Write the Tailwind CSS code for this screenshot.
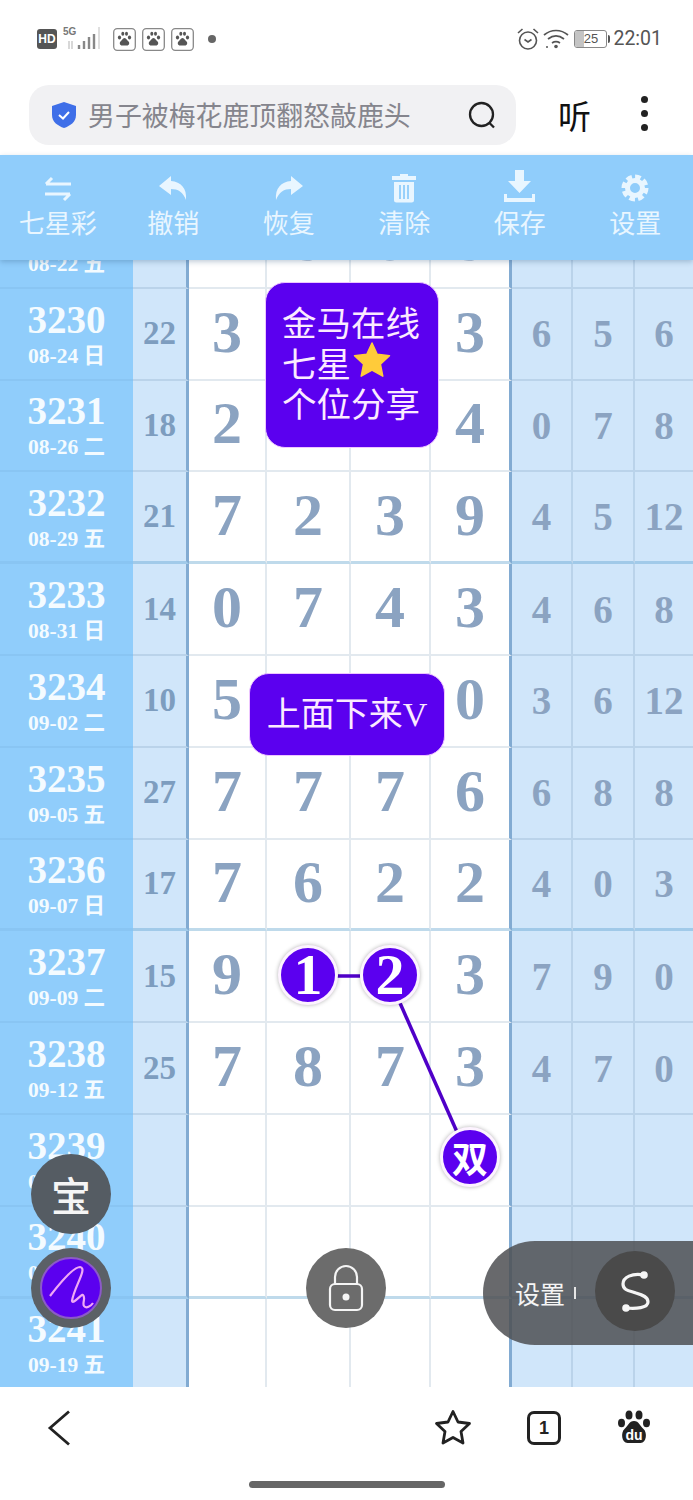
<!DOCTYPE html>
<html><head><meta charset="utf-8"><script src="https://cdn.jsdelivr.net/npm/@tailwindcss/browser@4"></script></head>
<body class="bg-white">
<div class="relative w-[693px] h-[1500px] overflow-hidden bg-white flex flex-col font-['Noto_Sans_CJK_SC','Noto_Sans',sans-serif]">

<!-- status bar -->
<div class="h-[75px] flex-none flex items-start justify-between pl-[37px] pr-[31px] pt-[27px] text-[#555]">
  <div class="flex items-center h-[24px]">
    <span class="w-[20px] h-[20px] rounded-[3px] bg-[#555] text-white text-[12px] font-bold leading-[20px] text-center font-['Liberation_Sans']">HD</span>
    <svg width="44" height="24" viewBox="0 0 44 24" class="ml-[5px] flex-none"><text x="1" y="8" font-size="10" font-family="Liberation Sans" fill="#777" font-weight="700">5G</text><path d="M7 14v8M10 14v8" stroke="#ccc" stroke-width="1.500"/><path d="M17 18v4M22 14v8M27 10v12M32 7v15" stroke="#888" stroke-width="2.400"/><path d="M37 0v22" stroke="#d5d5d5" stroke-width="1.500"/></svg>
    <div class="flex gap-[6px] ml-[7px]">
      <svg width="23" height="23" viewBox="0 0 23 23"><rect x=".7" y=".7" width="21.600" height="21.600" rx="3.500" fill="none" stroke="#888" stroke-width="1.300"/><g fill="#555"><ellipse cx="6.500" cy="9.500" rx="1.600" ry="2"/><ellipse cx="9.800" cy="5.800" rx="1.500" ry="2"/><ellipse cx="13.500" cy="5.800" rx="1.500" ry="2"/><ellipse cx="16.500" cy="9.500" rx="1.600" ry="2"/><path d="M11.500 10c-2 0-2.500 2.500-4 3.500-1.500 1.500-.5 4 1.500 4h5c2 0 3-2.500 1.500-4-1.500-1-2-3.500-4-3.500z"/></g></svg>
      <svg width="23" height="23" viewBox="0 0 23 23"><rect x=".7" y=".7" width="21.600" height="21.600" rx="3.500" fill="none" stroke="#888" stroke-width="1.300"/><g fill="#555"><ellipse cx="6.500" cy="9.500" rx="1.600" ry="2"/><ellipse cx="9.800" cy="5.800" rx="1.500" ry="2"/><ellipse cx="13.500" cy="5.800" rx="1.500" ry="2"/><ellipse cx="16.500" cy="9.500" rx="1.600" ry="2"/><path d="M11.500 10c-2 0-2.500 2.500-4 3.500-1.500 1.500-.5 4 1.500 4h5c2 0 3-2.500 1.500-4-1.500-1-2-3.500-4-3.500z"/></g></svg>
      <svg width="23" height="23" viewBox="0 0 23 23"><rect x=".7" y=".7" width="21.600" height="21.600" rx="3.500" fill="none" stroke="#888" stroke-width="1.300"/><g fill="#555"><ellipse cx="6.500" cy="9.500" rx="1.600" ry="2"/><ellipse cx="9.800" cy="5.800" rx="1.500" ry="2"/><ellipse cx="13.500" cy="5.800" rx="1.500" ry="2"/><ellipse cx="16.500" cy="9.500" rx="1.600" ry="2"/><path d="M11.500 10c-2 0-2.500 2.500-4 3.500-1.500 1.500-.5 4 1.500 4h5c2 0 3-2.500 1.500-4-1.500-1-2-3.500-4-3.500z"/></g></svg>
    </div>
    <span class="ml-[14px] w-[8px] h-[8px] rounded-full bg-[#666]"></span>
  </div>
  <div class="flex items-center h-[24px]">
    <svg width="24" height="24" viewBox="0 0 24 24" fill="none" stroke="#555" stroke-width="1.600"><circle cx="12" cy="13.500" r="8.500"/><path d="M8.500 12.500l3.500 2.500 3.500-2.500M2 6l4.500-4M22 6l-4.500-4"/></svg>
    <svg width="26" height="22" viewBox="0 0 26 22" fill="none" stroke="#555" stroke-width="1.700" class="ml-[3px]"><path d="M1 7c7-6 17-6 24 0M5 11c5-4 11-4 16 0M9 15c3-2 5-2 8 0"/><circle cx="13" cy="18.500" r="1.800" fill="#555" stroke="none"/><circle cx="4" cy="19" r="1" fill="#555" stroke="none"/></svg>
    <div class="ml-[5px] w-[33px] h-[18px] rounded-[3px] border border-[#888] relative overflow-hidden text-[13px] leading-[16px] text-center text-[#555] font-['Liberation_Sans'] flex-none"><span class="absolute left-0 top-0 h-full w-[9px] bg-[#c4c4c4]"></span><span class="relative">25</span></div>
    <span class="ml-[1px] w-[2px] h-[8px] bg-[#555] rounded-r"></span>
    <span class="ml-[3px] text-[19.500px] leading-[24px] font-['Roboto'] text-[#555]">22:01</span>
  </div>
</div>

<!-- search row -->
<div class="h-[80px] flex-none pl-[29px] flex items-start pt-[10px]">
  <div class="w-[487px] h-[60px] flex-none rounded-[20px] bg-[#f1f1f3] flex items-center pl-[22px] pr-[19px]">
    <svg width="26" height="28" viewBox="0 0 26 28" class="flex-none"><path d="M13 1l12 4v9c0 7-6 11-12 13C7 25 1 21 1 14V5z" fill="#3f6fe8"/><path d="M8 14l4 3.500 6-6.500" fill="none" stroke="#fff" stroke-width="2"/></svg>
    <span class="ml-[11px] flex-1 text-[26.900px] leading-[34px] text-[#85858d] whitespace-nowrap">男子被梅花鹿顶翻怒敲鹿头</span>
    <svg width="30" height="30" viewBox="0 0 30 30" fill="none" stroke="#222" stroke-width="2.300" class="flex-none"><circle cx="14.500" cy="14.500" r="11.500"/><path d="M22 22.500l5 5"/></svg>
  </div>
  <span class="ml-[42px] text-[33px] leading-[60px] text-[#111] w-[33px] flex-none">听</span>
  <div class="flex flex-col gap-[7px] ml-[50px] pt-[11px]"><span class="w-[7px] h-[7px] rounded-full bg-[#222]"></span><span class="w-[7px] h-[7px] rounded-full bg-[#222]"></span><span class="w-[7px] h-[7px] rounded-full bg-[#222]"></span></div>
</div>

<!-- toolbar -->
<div class="relative z-10 h-[105px] flex-none bg-[#90cdfb] grid grid-cols-6 shadow-[0_2px_5px_rgba(40,80,120,0.28)] text-[#e9f6ff] text-[26px] leading-[30px] text-center">
  <div class="flex flex-col items-center pt-[18px]"><svg width="30" height="30" viewBox="0 0 30 30" fill="none" stroke="#e9f6ff" stroke-width="3"><path d="M3 11h25M3 11l6-6M27 21H2M27 21l-6 6"/></svg><span class="mt-[4px]">七星彩</span></div>
  <div class="flex flex-col items-center pt-[18px]"><svg width="30" height="30" viewBox="0 0 30 30" fill="#e9f6ff"><path d="M13 3L1 13l12 9v-6c7 0 12 3 15 11 1-12-5-18-15-19z"/></svg><span class="mt-[4px]">撤销</span></div>
  <div class="flex flex-col items-center pt-[18px]"><svg width="30" height="30" viewBox="0 0 30 30" fill="#e9f6ff"><path d="M17 3l12 10-12 9v-6C10 16 5 19 2 27 1 15 7 9 17 8z"/></svg><span class="mt-[4px]">恢复</span></div>
  <div class="flex flex-col items-center pt-[18px]"><svg width="30" height="30" viewBox="0 0 30 30"><path d="M3 3h8V1h8v2h8v4H3zM5 9h20v18a2.500 2.500 0 0 1-2.500 2.500h-15A2.500 2.500 0 0 1 5 27z" fill="#e9f6ff"/><path d="M11 12v14M15 12v14M19 12v14" stroke="#90cdfb" stroke-width="1.800"/></svg><span class="mt-[4px]">清除</span></div>
  <div class="flex flex-col items-center pt-[15px]"><svg width="33" height="33" viewBox="0 0 33 33" fill="#e9f6ff"><path d="M12 0h9v11h7L16.500 23 5 11h7z"/><path d="M1 24h3v4h25v-4h3v8H1z"/></svg><span class="mt-[4px]">保存</span></div>
  <div class="flex flex-col items-center pt-[18px]"><svg width="30" height="30" viewBox="0 0 30 30" fill="none" stroke="#e9f6ff"><circle cx="15" cy="15" r="11" stroke-width="5" stroke-dasharray="5.500 3.100"/><circle cx="15" cy="15" r="7.500" stroke-width="5"/></svg><span class="mt-[4px]">设置</span></div>
</div>

<!-- table -->
<div class="h-[1127px] flex-none overflow-hidden">
  <div class="mt-[-63px] leading-none font-['Liberation_Serif','Noto_Sans_CJK_SC',serif] font-bold
    [&>div]:grid [&>div]:grid-cols-[133px_56px_78px_84px_80px_81px_61px_62px_58px] [&>div]:h-[91.8px]
    [&>div>div]:flex [&>div>div]:items-center [&>div>div]:justify-center [&>div>div]:border-b-2 [&>div>div]:border-b-[#3c6e96]/15
    [&>div:nth-child(4n)>div]:border-b-[3px] [&>div:nth-child(4n)>div]:border-b-[#4a96c8]/35
    [&>div>div:nth-child(1)]:flex-col [&>div>div:nth-child(1)]:bg-[#90cdfb] [&>div>div:nth-child(1)]:text-[#f4fbff] [&>div>div:nth-child(1)]:border-b-[#3c6e96]/8
    [&>div>div:nth-child(2)]:bg-[#d0e6fa] [&>div>div:nth-child(2)]:text-[33px] [&>div>div:nth-child(2)]:text-[#7d9dbf] [&>div>div:nth-child(2)]:border-r-[3px] [&>div>div:nth-child(2)]:border-r-[#82abd2]
    [&>div>div:nth-child(3)]:text-[60px] [&>div>div:nth-child(4)]:text-[60px] [&>div>div:nth-child(5)]:text-[60px] [&>div>div:nth-child(6)]:text-[60px]
    [&>div>div:nth-child(3)]:pb-[4px] [&>div>div:nth-child(4)]:pb-[4px] [&>div>div:nth-child(5)]:pb-[4px] [&>div>div:nth-child(6)]:pb-[4px]
    [&>div>div:nth-child(3)]:border-r-2 [&>div>div:nth-child(4)]:border-r-2 [&>div>div:nth-child(5)]:border-r-2 [&>div>div:nth-child(7)]:border-r-2 [&>div>div:nth-child(8)]:border-r-2
    [&>div>div:nth-child(3)]:border-r-[#3c6e96]/15 [&>div>div:nth-child(4)]:border-r-[#3c6e96]/15 [&>div>div:nth-child(5)]:border-r-[#3c6e96]/15 [&>div>div:nth-child(7)]:border-r-[#3c6e96]/15 [&>div>div:nth-child(8)]:border-r-[#3c6e96]/15
    [&>div>div:nth-child(6)]:border-r-[3px] [&>div>div:nth-child(6)]:border-r-[#82abd2]
    [&>div>div:nth-child(n+3)]:text-[#8ba3c1]
    [&>div>div:nth-child(7)]:bg-[#d0e6fa] [&>div>div:nth-child(8)]:bg-[#d0e6fa] [&>div>div:nth-child(9)]:bg-[#d0e6fa]
    [&>div>div:nth-child(7)]:text-[39px] [&>div>div:nth-child(8)]:text-[39px] [&>div>div:nth-child(9)]:text-[39px]
    [&_b]:text-[39px] [&_b]:leading-[36px] [&_b]:mt-[2px] [&_i]:not-italic [&_i]:text-[21.500px] [&_i]:leading-[24px] [&_i]:mt-[6px]">
    <div><div><b>3229</b><i>08-22 五</i></div><div></div><div>2</div><div>3</div><div>8</div><div>3</div><div></div><div></div><div></div></div>
    <div><div><b>3230</b><i>08-24 日</i></div><div>22</div><div>3</div><div>7</div><div>9</div><div>3</div><div>6</div><div>5</div><div>6</div></div>
    <div><div><b>3231</b><i>08-26 二</i></div><div>18</div><div>2</div><div>5</div><div>7</div><div>4</div><div>0</div><div>7</div><div>8</div></div>
    <div><div><b>3232</b><i>08-29 五</i></div><div>21</div><div>7</div><div>2</div><div>3</div><div>9</div><div>4</div><div>5</div><div>12</div></div>
    <div><div><b>3233</b><i>08-31 日</i></div><div>14</div><div>0</div><div>7</div><div>4</div><div>3</div><div>4</div><div>6</div><div>8</div></div>
    <div><div><b>3234</b><i>09-02 二</i></div><div>10</div><div>5</div><div>2</div><div>3</div><div>0</div><div>3</div><div>6</div><div>12</div></div>
    <div><div><b>3235</b><i>09-05 五</i></div><div>27</div><div>7</div><div>7</div><div>7</div><div>6</div><div>6</div><div>8</div><div>8</div></div>
    <div><div><b>3236</b><i>09-07 日</i></div><div>17</div><div>7</div><div>6</div><div>2</div><div>2</div><div>4</div><div>0</div><div>3</div></div>
    <div><div><b>3237</b><i>09-09 二</i></div><div>15</div><div>9</div><div></div><div></div><div>3</div><div>7</div><div>9</div><div>0</div></div>
    <div><div><b>3238</b><i>09-12 五</i></div><div>25</div><div>7</div><div>8</div><div>7</div><div>3</div><div>4</div><div>7</div><div>0</div></div>
    <div><div><b>3239</b><i>09-14 日</i></div><div></div><div></div><div></div><div></div><div></div><div></div><div></div><div></div></div>
    <div><div><b>3240</b><i>09-16 二</i></div><div></div><div></div><div></div><div></div><div></div><div></div><div></div><div></div></div>
    <div><div><b>3241</b><i>09-19 五</i></div><div></div><div></div><div></div><div></div><div></div><div></div><div></div><div></div></div>
  </div>
</div>

<!-- bottom nav -->
<div class="relative flex-1 bg-white">
  <svg width="24" height="36" viewBox="0 0 24 36" fill="none" stroke="#222" stroke-width="2.800" class="absolute left-[47px] top-[23px]"><path d="M22 1.500L3 18l19 16.500"/></svg>
  <svg width="38" height="36" viewBox="0 0 38 36" fill="none" stroke="#222" stroke-width="2.800" stroke-linejoin="round" class="absolute left-[434px] top-[22px]"><path d="M19 2.500l5 10.500 11.500 1.500-8.500 8 2 11.500-10-5.500-10 5.500 2-11.500-8.500-8L14 13z"/></svg>
  <div class="absolute left-[527px] top-[24px] w-[34px] h-[34px] rounded-[7px] border-[3px] border-[#222] text-[#222] text-[18px] font-bold leading-[28px] text-center font-['Liberation_Sans']">1</div>
  <svg width="34" height="36" viewBox="0 0 34 36" class="absolute left-[617px] top-[23px]"><g fill="#222"><ellipse cx="4.500" cy="13" rx="3.500" ry="4.200"/><ellipse cx="12" cy="5" rx="3.500" ry="4.500"/><ellipse cx="22" cy="5" rx="3.500" ry="4.500"/><ellipse cx="29.500" cy="13" rx="3.500" ry="4.200"/><path d="M17 11c-5 0-6 5-9.500 8-4 3.500-3 14 3 14h13c6 0 7-10.500 3-14-3.500-3-4.500-8-9.500-8z"/></g><text x="17" y="30" text-anchor="middle" font-size="14" font-family="Liberation Sans" font-weight="700" fill="#fff">du</text></svg>
  <div class="absolute left-[249px] top-[94px] w-[196px] h-[7px] rounded-full bg-[#666]"></div>
</div>

<!-- overlays -->
<div class="absolute left-[265px] top-[282px] w-[174px] h-[166px] rounded-[20px] bg-[#5b00ef] border border-[#eec6ff] pl-[16px] pt-[18px] text-[34.500px] leading-[40.500px] text-[#fbeaff] whitespace-nowrap">
  <div>金马在线</div>
  <div class="flex items-center">七星<svg width="38" height="38" viewBox="0 0 38 38" class="ml-[2px] mt-[-4px]"><path d="M19 2l5.200 11.200 12.300 1.500-9.100 8.400 2.400 12.100L19 29.200 8.200 35.200l2.400-12.100L1.500 14.700l12.300-1.500z" fill="#ffcb3a" stroke="#ffcb3a" stroke-width="1.500" stroke-linejoin="round"/></svg></div>
  <div>个位分享</div>
</div>
<div class="absolute left-[249px] top-[673px] w-[196px] h-[83px] rounded-[20px] bg-[#5b00ef] border border-[#eec6ff] flex items-center justify-center text-[34px] text-[#fbeaff] font-['Liberation_Serif','Noto_Sans_CJK_SC',serif] whitespace-nowrap">上面下来V</div>

<svg width="693" height="1500" viewBox="0 0 693 1500" class="absolute left-0 top-0 pointer-events-none"><path d="M336 976h24" stroke="#4f00c8" stroke-width="3.500"/><path d="M400 1003l57 129" stroke="#4f00c8" stroke-width="3.500"/></svg>
<div class="absolute left-[278px] top-[945px] w-[60px] h-[60px] rounded-full bg-[#5b00ef] border-[3px] border-[#fdf3ff] shadow-[0_0_4px_rgba(0,0,0,0.3)] flex items-center justify-center text-white font-bold text-[58px] leading-none font-['Liberation_Serif']">1</div>
<div class="absolute left-[360px] top-[945px] w-[60px] h-[60px] rounded-full bg-[#5b00ef] border-[3px] border-[#fdf3ff] shadow-[0_0_4px_rgba(0,0,0,0.3)] flex items-center justify-center text-white font-bold text-[58px] leading-none font-['Liberation_Serif']">2</div>
<div class="absolute left-[440px] top-[1127px] w-[60px] h-[60px] rounded-full bg-[#5b00ef] border-[3px] border-[#fdf3ff] shadow-[0_0_4px_rgba(0,0,0,0.3)] flex items-center justify-center text-white font-bold text-[36px] leading-none">双</div>

<div class="absolute left-[31px] top-[1154px] w-[80px] h-[80px] rounded-full bg-[#555c63] flex items-center justify-center text-[#f5f5f5] font-medium text-[40px] leading-none">宝</div>
<div class="absolute left-[31px] top-[1248px] w-[80px] h-[80px] rounded-full bg-[#5b6066] flex items-center justify-center">
  <div class="w-[62px] h-[62px] rounded-full bg-[#5b00ef] border-2 border-[#8c5ac8] flex items-center justify-center">
    <svg width="50" height="50" viewBox="0 0 50 50" fill="none" stroke="#f0a8f5" stroke-width="2.200"><path d="M4 33C14 20 28 4 34 4 42 5 28 24 26 38 27 42 36 30 37 32 40 35 36 40 38 43 40 46 45 43 47 40"/></svg>
  </div>
</div>
<div class="absolute left-[306px] top-[1248px] w-[80px] h-[80px] rounded-full bg-[#6c6c6c] flex items-center justify-center">
  <svg width="38" height="48" viewBox="0 0 38 48" fill="none" stroke="#f5f5f5" stroke-width="2.200"><path d="M8 20v-7a11 11 0 0 1 22 0v7"/><rect x="3" y="20" width="32" height="26" rx="5"/><circle cx="19" cy="33" r="3.500" fill="#f5f5f5" stroke="none"/></svg>
</div>
<div class="absolute left-[483px] top-[1241px] w-[210px] h-[104px] rounded-l-[52px] bg-[#4d4f52]/85 flex items-center pl-[32px] text-[25px] text-[#f5f5f5]">
  <span class="leading-none">设置</span>
  <span class="ml-[9px] w-[2px] h-[12px] bg-[#e5e5e5]"></span>
  <div class="absolute left-[112px] top-[10px] w-[80px] h-[80px] rounded-full bg-[#4a4a4a] flex items-center justify-center">
    <svg width="34" height="44" viewBox="0 0 34 44" fill="none" stroke="#f5f5f5" stroke-width="3.200" stroke-linecap="round"><path d="M26 6C14 4 5 8 5 15 5 22 13 22 18 24 25 26 30 28 30 33 30 39 18 40 8 39"/><circle cx="26" cy="6" r="3.800" fill="#f5f5f5" stroke="none"/><circle cx="8" cy="39" r="3.800" fill="#f5f5f5" stroke="none"/></svg>
  </div>
</div>
</div>
</body></html>
